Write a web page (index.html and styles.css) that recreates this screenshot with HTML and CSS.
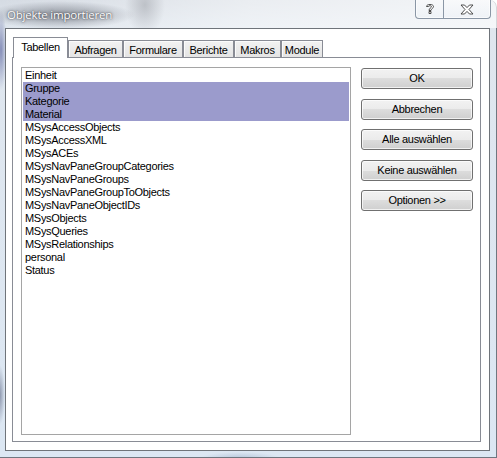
FILE: index.html
```html
<!DOCTYPE html>
<html>
<head>
<meta charset="utf-8">
<link rel="stylesheet" href="styles.css">
</head>
<body>
<div class="window">
  <div class="titlebar">
    <span class="title">Objekte importieren</span>
    <div class="caption-btns">
      <div class="cap help">
        <svg width="10" height="12" viewBox="0 0 10 12"><path d="M1.5 3.5 C1.5 0.8 8.5 0.8 8.5 3.5 C8.5 5.5 6 5.5 6 7.5 L4 7.5 C4 5 6.5 5 6.5 3.6 C6.5 2.5 3.5 2.5 3.5 3.5 Z M4 8.5 H6 V10.5 H4 Z" fill="#fff" stroke="#3c3c3c" stroke-width="0.9" stroke-linejoin="round"/></svg>
      </div>
      <div class="cap close">
        <svg width="14" height="11" viewBox="0 0 14 11"><path d="M1 1 H4.5 L7 3.6 L9.5 1 H13 L9 5.5 L13 10 H9.5 L7 7.4 L4.5 10 H1 L5 5.5 Z" fill="#fff" stroke="#3c3c3c" stroke-width="0.9" stroke-linejoin="round"/></svg>
      </div>
    </div>
  </div>
  <div class="client">
    <div class="tabs">
      <div class="tab sel t1">Tabellen</div>
      <div class="tab t2">Abfragen</div>
      <div class="tab t3">Formulare</div>
      <div class="tab t4">Berichte</div>
      <div class="tab t5">Makros</div>
      <div class="tab t6">Module</div>
    </div>
    <div class="panel">
      <div class="listbox">
        <div class="item">Einheit</div>
        <div class="item on">Gruppe</div>
        <div class="item on">Kategorie</div>
        <div class="item on">Material</div>
        <div class="item">MSysAccessObjects</div>
        <div class="item">MSysAccessXML</div>
        <div class="item">MSysACEs</div>
        <div class="item">MSysNavPaneGroupCategories</div>
        <div class="item">MSysNavPaneGroups</div>
        <div class="item">MSysNavPaneGroupToObjects</div>
        <div class="item">MSysNavPaneObjectIDs</div>
        <div class="item">MSysObjects</div>
        <div class="item">MSysQueries</div>
        <div class="item">MSysRelationships</div>
        <div class="item">personal</div>
        <div class="item">Status</div>
      </div>
      <div class="buttons">
        <div class="btn">OK</div>
        <div class="btn">Abbrechen</div>
        <div class="btn">Alle auswählen</div>
        <div class="btn">Keine auswählen</div>
        <div class="btn">Optionen &gt;&gt;</div>
      </div>
    </div>
  </div>
</div>
</body>
</html>
```

FILE: styles.css
```css
* { box-sizing: border-box; }
html, body { margin: 0; padding: 0; }
body {
  width: 497px;
  height: 458px;
  overflow: hidden;
  background: #fff;
  font-family: "Liberation Sans", Arial, sans-serif;
  font-size: 11px;
  letter-spacing: -0.3px;
  color: #000;
}
.window {
  width: 497px;
  height: 458px;
  display: flex;
  flex-direction: column;
  border-top-right-radius: 7px;
  background:
    radial-gradient(ellipse 6px 40px at 1px 50px, rgba(60,70,140,0.55), rgba(60,70,140,0) ),
    radial-gradient(ellipse 5px 30px at 0px 395px, rgba(90,100,130,0.6), rgba(90,100,130,0)),
    radial-gradient(ellipse 20px 30px at 145px 5px, rgba(120,125,135,0.55), rgba(120,125,135,0)),
    radial-gradient(ellipse 40px 6px at 240px 458px, rgba(150,170,195,0.5), rgba(150,170,195,0)),
    linear-gradient(to bottom, #d5dbe3 0px, #dfe6ee 28px, #dce7f3 100%);
  box-shadow: inset -1px 0 0 #6f7780, inset 0 -1px 0 #6f7780;
}
.titlebar {
  height: 28px;
  display: flex;
  align-items: flex-start;
  padding-left: 7px;
  position: relative;
  background:
    radial-gradient(ellipse 75px 14px at 60px 15px, rgba(115,120,130,0.75), rgba(115,120,130,0)),
    linear-gradient(to right, rgba(255,255,255,0.0), rgba(255,255,255,0.5) 50%, rgba(255,255,255,0.7));
}
.title {
  margin-top: 8px;
  font-family: "Open Sans", "DejaVu Sans", sans-serif;
  font-size: 11.5px;
  letter-spacing: -0.2px;
  line-height: 14px;
  color: #ffffff;
  text-shadow: 0 0 3px rgba(60,60,70,0.9), 0 0 1px rgba(60,60,70,0.8);
}
.caption-btns {
  position: absolute;
  top: -1px;
  left: 415px;
  display: flex;
  height: 20px;
  border: 1px solid #8a96a5;
  border-top: none;
  border-radius: 0 0 4px 4px;
  background: linear-gradient(to bottom, rgba(255,255,255,0.55), rgba(235,240,246,0.6));
  box-shadow: inset 0 0 0 1px rgba(255,255,255,0.6);
}
.cap {
  display: flex;
  align-items: center;
  justify-content: center;
  padding-top: 1px;
}
.help { width: 28px; border-right: 1px solid #8a96a5; }
.close { width: 46px; }
.client {
  margin: 0 7px 7px 5px;
  flex: 1;
  border: 1px solid #6f747a;
  background: #fff;
  padding: 8px 8px 8px 6px;
  display: flex;
  flex-direction: column;
}
.tabs {
  display: flex;
  align-items: flex-end;
  height: 20px;
  padding-left: 1px;
  position: relative;
  z-index: 1;
}
.tab {
  height: 17px;
  border: 1px solid #898c95;
  border-bottom: none;
  background: linear-gradient(to bottom, #f2f2f2, #e4e4e4);
  text-align: center;
  line-height: 16px;
  padding-top: 1px;
  box-shadow: inset 1px 1px 0 #fbfbfb;
}
.tab.sel {
  height: 21px;
  background: #fff;
  box-shadow: none;
  margin-bottom: -1px;
  line-height: 17px;
  padding-top: 1px;
}
.t1 { width: 55px; }
.t2 { width: 55px; }
.t3 { width: 60px; }
.t4 { width: 51px; }
.t5 { width: 47px; }
.t6 { width: 42px; }
.panel {
  flex: 1;
  border: 1px solid #898c95;
  display: flex;
  padding: 9px 7px 6px 8px;
  gap: 10px;
}
.listbox {
  width: 330px;
  border: 1px solid #a5a5a5;
  padding: 1px 1px;
}
.item {
  height: 13px;
  line-height: 13px;
  padding-left: 2px;
  white-space: nowrap;
}
.item.on { background: #9b9bcc; }
.buttons {
  display: flex;
  flex-direction: column;
  gap: 9.5px;
  padding-top: 1px;
  width: 112px;
}
.btn {
  height: 21px;
  border: 1px solid #707070;
  border-radius: 3px;
  background: linear-gradient(to bottom, #f2f2f2 0%, #ebebeb 50%, #dddddd 50%, #cfcfcf 100%);
  box-shadow: inset 0 0 0 1px rgba(255,255,255,0.7);
  text-align: center;
  line-height: 19px;
}
```
